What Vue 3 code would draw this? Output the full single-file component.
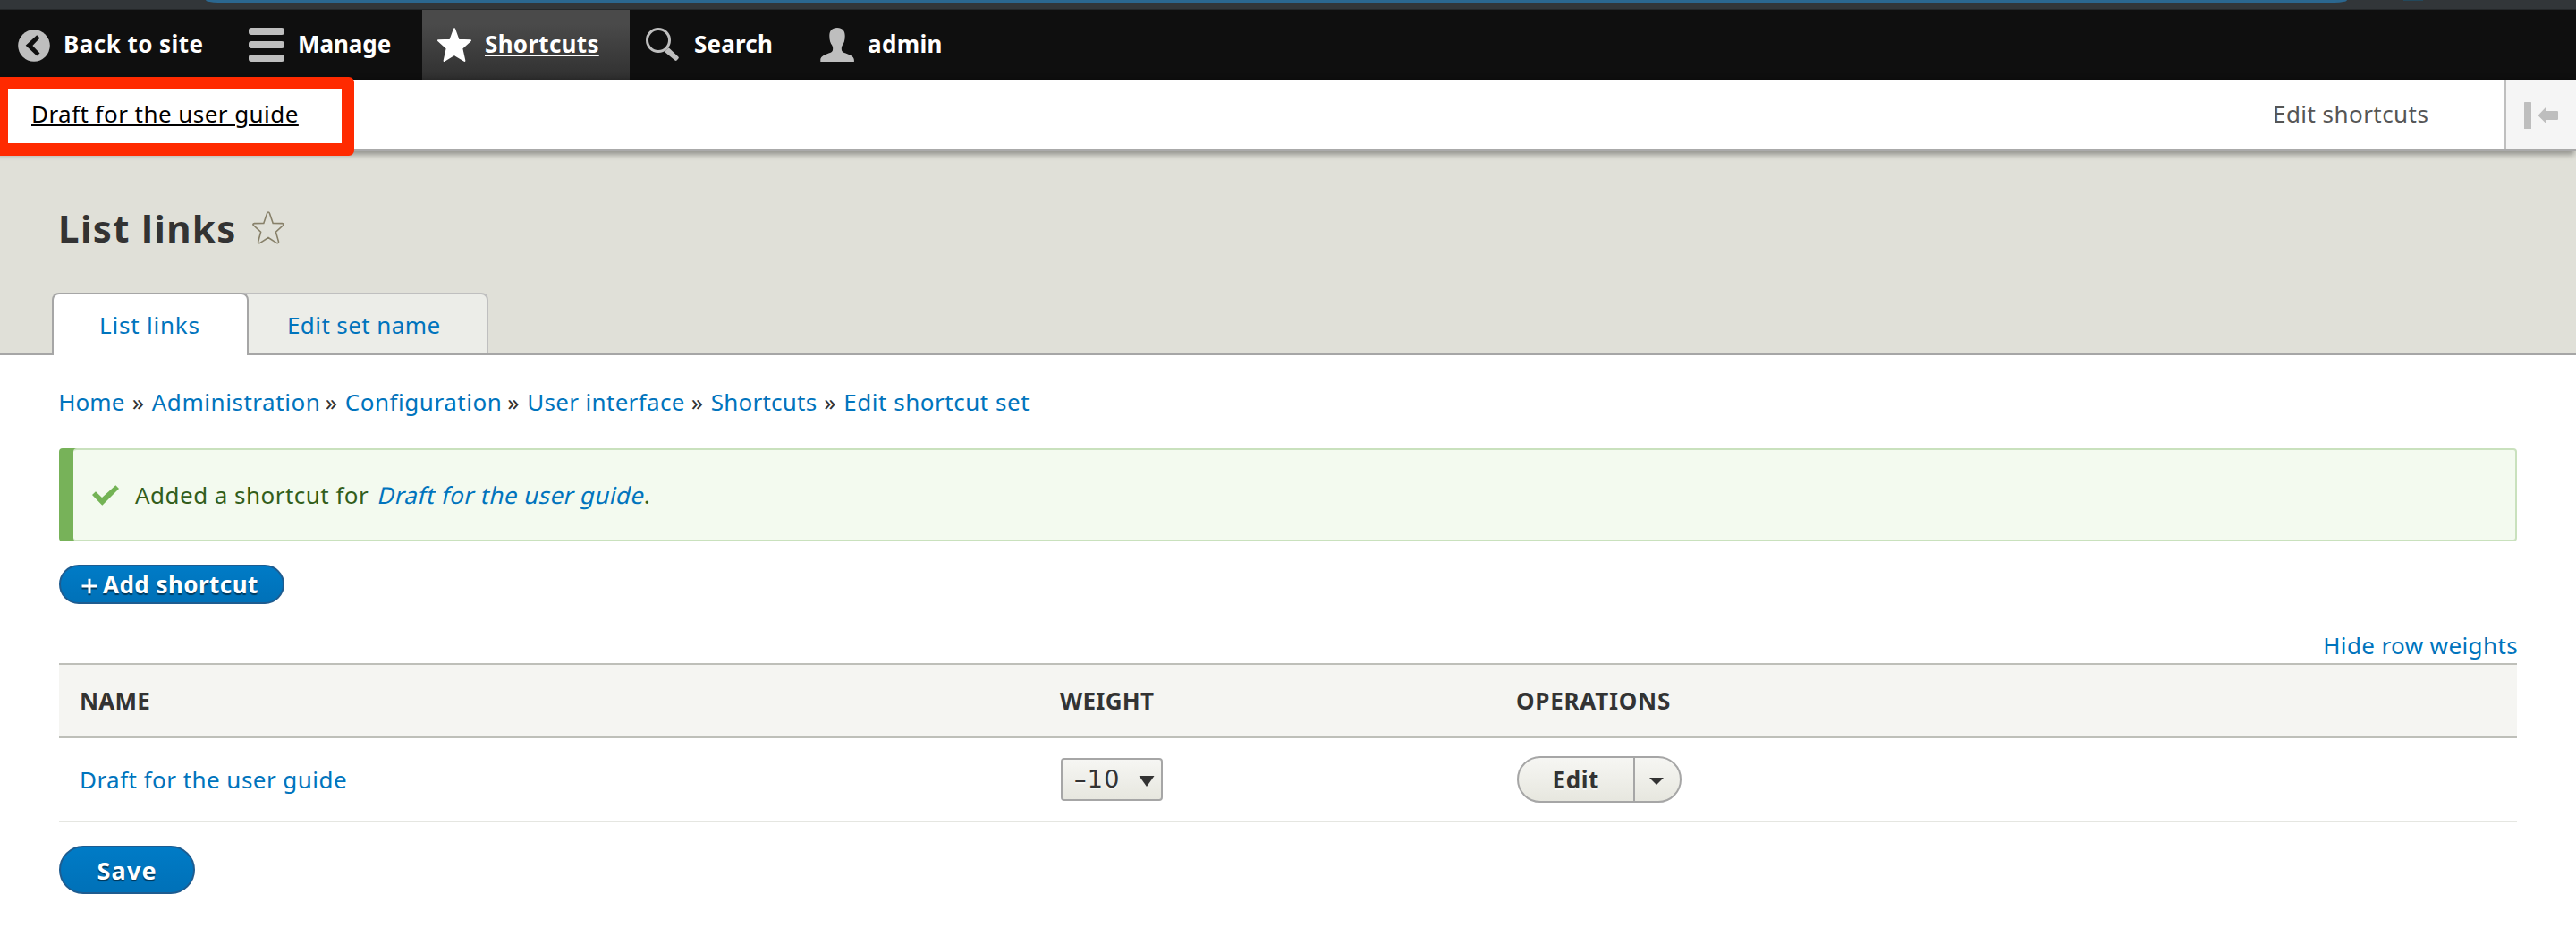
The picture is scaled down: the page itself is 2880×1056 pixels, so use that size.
<script setup>
const tabs = [
  { id: 'back', label: 'Back to site' },
  { id: 'manage', label: 'Manage' },
  { id: 'shortcuts', label: 'Shortcuts', active: true },
  { id: 'search', label: 'Search' },
  { id: 'user', label: 'admin' },
]

const crumbs = [
  { label: 'Home', width: 82.5, spacing: 0.06 },
  { label: 'Administration', width: 194, spacing: 0.55 },
  { label: 'Configuration', width: 181.5, spacing: 0.54 },
  { label: 'User interface', width: 183.5, spacing: 0.33 },
  { label: 'Shortcuts', width: 126.5, spacing: 0.23 },
  { label: 'Edit shortcut set', width: 215, spacing: 0.53 },
]

const columns = [
  { id: 'name', label: 'Name' },
  { id: 'weight', label: 'Weight' },
  { id: 'operations', label: 'Operations' },
]
</script>

<template>
  <div class="page">
    <div class="browser-edge">
      <span class="address-bar"></span>
      <span class="browser-icon"></span>
    </div>

    <nav class="toolbar">
      <a v-for="tab in tabs" :key="tab.id" class="tab" :class="[`tab-${tab.id}`, { active: tab.active }]">
        <svg class="tab-icon" viewBox="0 0 40 40" width="40" height="40">
          <template v-if="tab.id === 'back'">
            <circle cx="22" cy="21" r="17.8" />
            <path class="cut" d="M12.7 20.7 25.2 9.3 28.5 12.4 20.4 20.9 28.5 29.5 25.2 32.6Z" />
          </template>
          <template v-else-if="tab.id === 'manage'">
            <rect x="0" y="1" width="40" height="8" rx="3" />
            <rect x="0" y="16" width="40" height="8" rx="3" />
            <rect x="0" y="31" width="40" height="8" rx="3" />
          </template>
          <path
            v-else-if="tab.id === 'shortcuts'"
            class="rounded"
            d="M20 2.2 24.6 14.8 38 15.2 28.3 23.9 31.4 38 20 31 8.6 38 11.7 23.9 2 15.2 15.4 14.8Z"
          />
          <template v-else-if="tab.id === 'search'">
            <circle class="lens" cx="16" cy="15" r="12.5" />
            <path d="M22.8 27.8 27.6 23.3 38.4 33.6Q39.4 34.6 38.4 35.6L36.6 37.6Q35.6 38.4 34.6 37.6Z" />
          </template>
          <path
            v-else
            d="M20 1C14 1 11.3 4.5 11.3 10C11.3 15 12.5 18.500 14.300 20.800C15.500 22.500 15.300 25.500 14.800 26.800C13.500 30.300 1.300 30.500 1.300 37.300V39H38.900V37.300C38.900 30.500 26.500 30.300 25.200 26.800C24.700 25.500 24.500 22.500 25.700 20.800C27.500 18.500 28.700 15 28.700 10C28.700 4.500 26 1 20 1Z"
          />
        </svg>
        <span class="tab-label">{{ tab.label }}</span>
      </a>
    </nav>

    <div class="tray">
      <a class="tray-link">Draft for the user guide</a>
      <a class="tray-edit">Edit shortcuts</a>
      <span class="tray-toggle">
        <svg viewBox="0 0 38 30" width="38" height="30">
          <rect width="8" height="30" rx="0.500" />
          <path d="M15.500 15 24.500 5.500V10H37Q38 10 38 11V19Q38 20 37 20H25V24.500Z" />
        </svg>
      </span>
      <span class="callout"></span>
    </div>

    <header class="header">
      <div class="title-row">
        <h1>List links</h1>
        <svg class="title-star" viewBox="0 0 36 37" width="36" height="37">
          <path
            d="M18 1Q19 1 19.400 2.200L23.200 13.400 33.500 13.600Q36 14 34.500 15.800L26.400 23.200 29.500 34Q29.500 36.200 27.500 35.600L18 29.500 8.500 35.600Q6.500 36.200 6.700 34L9.600 23.200 1.500 15.800Q0 14 2.500 13.600L12.800 13.400 16.600 2.200Q17 1 18 1Z"
          />
        </svg>
      </div>
      <div class="page-tabs">
        <a class="page-tab current">List links</a>
        <a class="page-tab other">Edit set name</a>
      </div>
    </header>

    <main class="content">
      <nav class="breadcrumb">
        <template v-for="(crumb, i) in crumbs" :key="crumb.label">
          <span v-if="i" class="separator">»</span>
          <a :style="{ width: crumb.width + 'px', letterSpacing: crumb.spacing + 'px' }">{{ crumb.label }}</a>
        </template>
      </nav>

      <div class="message">
        <svg viewBox="0 0 30 24" width="30" height="24">
          <path d="M0 12 4 8.300 11 15 26.300 1.300 30 5 11.300 23.700Z" />
        </svg>
        <span class="message-text">Added a shortcut for</span>
        <a class="message-link">Draft for the user guide</a>
        <span class="message-end">.</span>
      </div>

      <a class="button add">
        <svg viewBox="0 0 18 18" width="18" height="18">
          <path d="M0.500 9H17.500M9 0.800V17.200" />
        </svg>
        <span>Add shortcut</span>
      </a>

      <div class="weights"><a>Hide row weights</a></div>

      <div class="table">
        <div class="row head">
          <div v-for="col in columns" :key="col.id" :class="`col-${col.id}`">{{ col.label }}</div>
        </div>
        <div class="row body">
          <div><a class="row-link">Draft for the user guide</a></div>
          <div>
            <span class="select">
              <span>–10</span>
              <svg viewBox="0 0 18 12" width="18" height="12"><path d="M0.500 0H17.500L9 12Z" /></svg>
            </span>
          </div>
          <div>
            <span class="dropbutton">
              <a class="drop-action">Edit</a>
              <span class="drop-toggle">
                <svg viewBox="0 0 16 8" width="16" height="8"><path d="M0 0H16L8 8Z" /></svg>
              </span>
            </span>
          </div>
        </div>
      </div>

      <a class="button save">Save</a>
    </main>
  </div>
</template>

<style>
body {
  background: #fff;
}
</style>

<style scoped>
.page,
.page * {
  box-sizing: border-box;
}

.page {
  width: 2880px;
  height: 1056px;
  overflow: hidden;
  background: #fff;
  color: #333;
  font-family: "Noto Sans", "Open Sans", sans-serif;
  font-size: 26px;
  line-height: 40px;
}

a,
span,
h1 {
  white-space: nowrap;
}

svg {
  display: block;
  flex: none;
}

/* Browser chrome above the page */
.browser-edge {
  display: flex;
  height: 11px;
  padding-left: 230px;
  background: #323639;
  border-bottom: 1px solid #25282a;
}

.address-bar {
  width: 2394px;
  height: 3px;
  background: #2b678f;
  border-radius: 0 0 14px 14px / 0 0 3px 3px;
}

.browser-icon {
  width: 22px;
  height: 1px;
  margin-left: 63px;
  background: #23485b;
}

/* Toolbar */
.toolbar {
  display: flex;
  height: 78px;
  background: #0f0f0f;
}

.tab {
  display: flex;
  gap: 14px;
  height: 78px;
  padding-left: 16px;
  color: #fff;
  font-weight: 700;
}

.tab-icon {
  margin-top: 19px;
  fill: #bebebe;
}

.tab-label {
  line-height: 76px;
}

.tab-back {
  width: 262px;
  gap: 15px;
  letter-spacing: 0.45px;
}

.tab-manage {
  width: 210px;
  gap: 15px;
  letter-spacing: -0.06px;
}

.tab-shortcuts {
  width: 232px;
  letter-spacing: 0.3px;
}

.tab-search {
  width: 196px;
  gap: 16px;
  letter-spacing: 0.21px;
}

.tab-user {
  letter-spacing: 0.34px;
}

.active {
  background: linear-gradient(#4a4a4a 20%, #303030);
}

.active .tab-icon {
  fill: #fff;
}

.active .tab-label {
  text-decoration: underline;
  text-decoration-thickness: 2px;
  text-underline-offset: 2px;
}

.cut {
  fill: #0f0f0f;
}

.rounded {
  stroke: #fff;
  stroke-width: 2;
  stroke-linejoin: round;
}

.lens {
  fill: none;
  stroke: #bebebe;
  stroke-width: 3;
}

/* Shortcut tray */
.tray {
  position: relative;
  display: flex;
  height: 80px;
  padding-left: 35px;
  background: #fff;
  border-bottom: 2px solid #aaa;
  box-shadow: -4px 2px 6px 2px rgba(0, 0, 0, 0.333);
  line-height: 76px;
}

.tray-link {
  color: #000;
  letter-spacing: 0.45px;
  text-decoration: underline;
  text-decoration-thickness: 2px;
  text-underline-offset: 2px;
}

.tray-edit {
  width: 259px;
  margin-left: auto;
  color: #565656;
  letter-spacing: 0.45px;
}

.tray-toggle {
  width: 80px;
  padding: 25px 0 0 20px;
  background: #f5f5f5;
  border-left: 2px solid #bfbfbf;
}

.tray-toggle svg {
  fill: #bebebe;
}

.callout {
  position: absolute;
  z-index: 1;
  top: -3px;
  left: -5px;
  width: 401px;
  height: 88px;
  border: 14px solid #ff2a00;
  border-radius: 6px;
}

/* Page header */
.header {
  display: flex;
  flex-direction: column;
  height: 228px;
  padding: 46px 0 0 58px;
  background: #e0e0d8;
  border-bottom: 2px solid #a6a6a6;
}

.title-row {
  display: flex;
  padding-left: 7px;
}

h1 {
  width: 217px;
  margin: 0;
  font-size: 42px;
  font-weight: 700;
  line-height: 80px;
  letter-spacing: 1.4px;
}

.title-star {
  margin-top: 21px;
  fill: none;
  stroke: #878069;
  stroke-width: 1.600;
}

.page-tabs {
  display: flex;
  align-items: flex-start;
  height: 70px;
  margin-top: auto;
  margin-bottom: -2px;
}

.page-tab {
  border-style: solid;
  border-width: 2px 2px 0;
  line-height: 68px;
  color: #0074bd;
}

.current {
  position: relative;
  width: 220px;
  height: 70px;
  padding-left: 51px;
  background: #fff;
  border-color: #a6a6a6;
  border-radius: 8px 8px 0 0;
  letter-spacing: 0.8px;
}

.other {
  width: 276px;
  height: 68px;
  margin-left: -8px;
  padding-left: 49px;
  background: #ecede8;
  border-color: #bfbfbf;
  border-radius: 0 8px 0 0;
  letter-spacing: 0.41px;
}

/* Content */
.content {
  display: flex;
  flex-direction: column;
  align-items: flex-start;
  padding: 32px 66px 0;
}

.content a {
  color: #0074bd;
}

.breadcrumb {
  display: flex;
  margin-left: -0.800px;
}

.separator {
  width: 22px;
}

.message {
  display: flex;
  align-items: center;
  align-self: stretch;
  height: 104px;
  margin: 32px 0 0 16px;
  padding-left: 21px;
  background: #f3faef;
  border: 2px solid #c9e1bd;
  border-left: 0;
  border-radius: 4px;
  box-shadow: -16px 0 0 #77b259;
  color: #325e1c;
  line-height: 100px;
}

.message svg {
  fill: #73b355;
}

.message-text {
  margin-left: 18px;
  letter-spacing: 0.47px;
}

/* Upright letterforms slanted along the baseline */
.message-link {
  width: 299px;
  margin-left: 9px;
  letter-spacing: 0.420px;
  transform: skewX(-13deg);
  transform-origin: 0 60%;
}

.message-end {
  margin-left: -0.500px;
}

.content .button {
  display: flex;
  background: linear-gradient(#007bc6, #0071b8);
  border: 2px solid #1e5c90;
  color: #fff;
  font-weight: 700;
  text-shadow: 0 2px 1px rgba(0, 0, 0, 0.5);
}

.add {
  width: 252px;
  height: 44px;
  margin-top: 26px;
  padding-left: 23px;
  border-radius: 22px;
  letter-spacing: 0.45px;
}

.add svg {
  margin: 12.500px 6px 0 0;
  overflow: visible;
  fill: none;
  stroke: #fff;
  stroke-width: 3;
  filter: drop-shadow(0 2px 0.500px rgba(0, 0, 0, 0.5));
}

.weights {
  align-self: flex-end;
  margin: 26px -1px 0 0;
  letter-spacing: 0.38px;
}

.table {
  align-self: stretch;
}

.row {
  display: grid;
  grid-template-columns: 1096px 510px 1fr;
}

.head {
  height: 84px;
  background: #f5f5f2;
  border: solid #bebfb9;
  border-width: 2px 0;
  font-weight: 700;
  line-height: 80px;
  text-transform: uppercase;
}

.head > div {
  padding-left: 23px;
}

.col-name {
  letter-spacing: 0.22px;
}

.col-weight {
  letter-spacing: 0.29px;
}

.col-operations {
  letter-spacing: 0.74px;
}

.body {
  height: 94px;
  border-bottom: 2px solid #e5e6e1;
  line-height: 92px;
}

.body > div {
  display: flex;
  align-items: center;
  padding-left: 24px;
}

.row-link {
  margin-left: -1px;
  letter-spacing: 0.46px;
}

.select {
  display: flex;
  align-items: center;
  justify-content: space-between;
  width: 114px;
  height: 48px;
  padding: 0 7px 0 13px;
  background: linear-gradient(#f6f6f3, #e7e7df);
  border: 2px solid #a6a6a6;
  border-radius: 4px;
  font-family: "DejaVu Sans", sans-serif;
  font-size: 27px;
  line-height: 44px;
  letter-spacing: 1.300px;
  text-shadow: 0 2px rgba(255, 255, 255, 0.6);
}

.select svg,
.drop-toggle svg {
  margin-top: 4px;
  fill: #333;
}

.dropbutton {
  display: flex;
  width: 184px;
  height: 52px;
  background: linear-gradient(#f6f6f3, #e7e7df);
  border: 2px solid #a6a6a6;
  border-radius: 26px;
  line-height: 48px;
}

.content .drop-action {
  width: 130px;
  padding-left: 37.500px;
  border-right: 2px solid #a6a6a6;
  color: #333;
  font-weight: 700;
  letter-spacing: 0.580px;
  text-shadow: 0 2px rgba(255, 255, 255, 0.6);
}

.drop-toggle {
  display: flex;
  align-items: center;
  padding-left: 16px;
}

.save {
  width: 152px;
  height: 54px;
  margin-top: 26px;
  padding: 1px 0 0 40.500px;
  border-radius: 27px;
  font-size: 27px;
  line-height: 50px;
  letter-spacing: 1.180px;
}
</style>
